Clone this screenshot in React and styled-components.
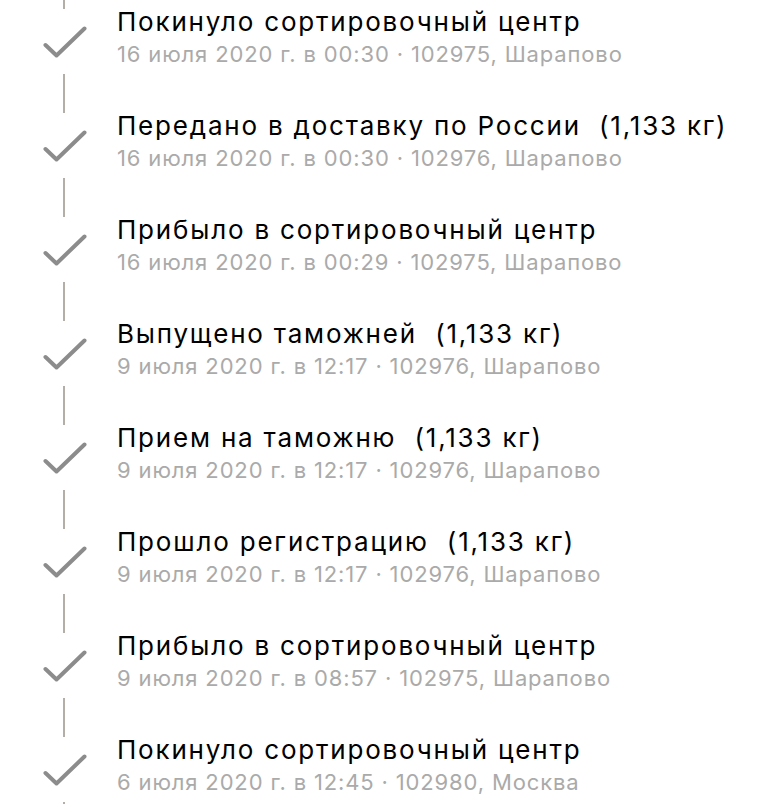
import React from "react";
import styled, { createGlobalStyle } from "styled-components";

const Global = createGlobalStyle`
  html, body { margin: 0; padding: 0; background: #ffffff; }
  body { font-family: Inter, "Noto Sans", "Liberation Sans", sans-serif; overflow: hidden; }
`;

const List = styled.div`
  display: flex;
  flex-direction: column;
  margin-top: -10px;
`;

const Row = styled.div`
  display: grid;
  grid-template-columns: 44px 1fr;
  column-gap: 30px;
  padding-left: 43px;
  height: 104px;
`;

const Rail = styled.div`
  display: flex;
  flex-direction: column;
  align-items: center;
`;

const Segment = styled.div`
  width: 2px;
  height: ${(p) => p.$h}px;
  margin-left: -2px;
  background: #b5aea6;
`;

const Check = styled.svg`
  display: block;
  width: 44px;
  height: 33px;
  margin: ${(p) => p.$mt}px 0 ${(p) => p.$mb}px;
`;

const Body = styled.div`
  display: flex;
  flex-direction: column;
  padding-top: 17px;
`;

const Title = styled.div`
  font-size: 26px;
  line-height: 30px;
  color: #000;
  white-space: pre;
  letter-spacing: 1.8px;
`;

const Meta = styled.div`
  margin-top: 4px;
  font-size: 22px;
  line-height: 26px;
  color: #aaaaaa;
  white-space: pre;
  letter-spacing: 0.85px;
`;

const events = [
  ["Покинуло сортировочный центр", "16 июля 2020 г. в 00:30 · 102975, Шарапово"],
  ["Передано в доставку по России  (1,133 кг)", "16 июля 2020 г. в 00:30 · 102976, Шарапово"],
  ["Прибыло в сортировочный центр", "16 июля 2020 г. в 00:29 · 102975, Шарапово"],
  ["Выпущено таможней  (1,133 кг)", "9 июля 2020 г. в 12:17 · 102976, Шарапово"],
  ["Прием на таможню  (1,133 кг)", "9 июля 2020 г. в 12:17 · 102976, Шарапово"],
  ["Прошло регистрацию  (1,133 кг)", "9 июля 2020 г. в 12:17 · 102976, Шарапово"],
  ["Прибыло в сортировочный центр", "9 июля 2020 г. в 08:57 · 102975, Шарапово"],
  ["Покинуло сортировочный центр", "6 июля 2020 г. в 12:45 · 102980, Москва"],
];

function CheckIcon() {
  return (
    <Check viewBox="0 0 44 33" $mt={17} $mb={15}>
      <polyline
        points="2.5,19 13.5,29.5 41.5,2.5"
        fill="none"
        stroke="#8c8c8c"
        strokeWidth="4"
        strokeLinecap="round"
        strokeLinejoin="round"
      />
    </Check>
  );
}

export default function App() {
  return (
    <>
      <Global />
      <List>
        {events.map(([t, m], i) => (
          <Row key={i}>
            <Rail>
              <Segment $h={19} />
              <CheckIcon />
              <Segment $h={20} />
            </Rail>
            <Body>
              <Title>{t}</Title>
              <Meta>{m}</Meta>
            </Body>
          </Row>
        ))}
      </List>
    </>
  );
}
